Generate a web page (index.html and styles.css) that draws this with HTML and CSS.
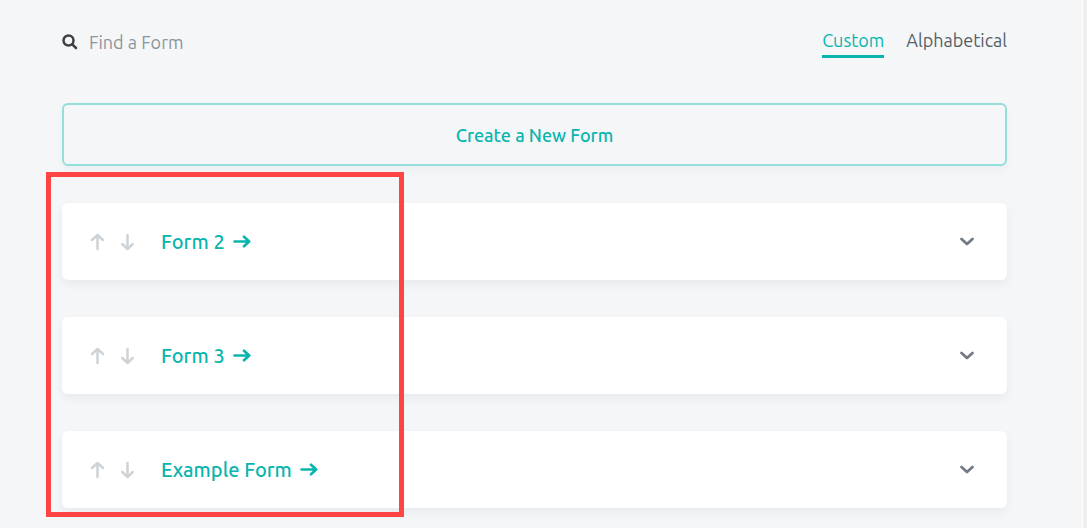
FILE: index.html
```html
<!DOCTYPE html>
<html lang="en">
<head>
<meta charset="utf-8">
<meta name="viewport" content="width=device-width, initial-scale=1">
<title>Forms</title>
<link rel="stylesheet" href="styles.css">
</head>
<body>
<svg class="sprite" aria-hidden="true">
  <symbol id="arrow" viewBox="0 0 18 14"><path d="M1.5 6.500H16M11 1.700 16.200 6.500l-5.200 4.800"/></symbol>
  <symbol id="up" viewBox="0 0 14 18"><path d="M7.500 16V2.500M2 7 7.500 2 13 7"/></symbol>
  <symbol id="down" viewBox="0 0 14 18"><path d="M6.500 2V15.500M1.300 11 6.500 16 11.700 11"/></symbol>
  <symbol id="chevron" viewBox="0 0 16 10"><path d="M2.500 2l5.500 5L13.500 2"/></symbol>
</svg>
<main class="page">
  <header class="toolbar">
    <label class="search">
      <svg class="search-icon" viewBox="0 0 16 16" role="img" aria-label="Search"><circle cx="6.500" cy="6.500" r="5"/><path d="M10.300 10.300 14 14"/></svg>
      <input class="search-input" type="text" placeholder="Find a Form" aria-label="Find a Form">
    </label>
    <nav class="tabs">
      <a class="tab tab-active" href="#custom">Custom</a>
      <a class="tab" href="#alphabetical">Alphabetical</a>
    </nav>
  </header>
  <button class="create" type="button">Create a New Form</button>
  <ul class="forms">
    <li class="card">
      <button class="move" type="button" aria-label="Move up"><svg class="move-icon"><use href="#up"/></svg></button>
      <button class="move" type="button" aria-label="Move down"><svg class="move-icon"><use href="#down"/></svg></button>
      <a class="form-link" href="#form-2">Form 2<svg class="arrow-icon"><use href="#arrow"/></svg></a>
      <button class="toggle" type="button" aria-label="Show details"><svg class="chevron-icon"><use href="#chevron"/></svg></button>
    </li>
    <li class="card">
      <button class="move" type="button" aria-label="Move up"><svg class="move-icon"><use href="#up"/></svg></button>
      <button class="move" type="button" aria-label="Move down"><svg class="move-icon"><use href="#down"/></svg></button>
      <a class="form-link" href="#form-3">Form 3<svg class="arrow-icon"><use href="#arrow"/></svg></a>
      <button class="toggle" type="button" aria-label="Show details"><svg class="chevron-icon"><use href="#chevron"/></svg></button>
    </li>
    <li class="card">
      <button class="move" type="button" aria-label="Move up"><svg class="move-icon"><use href="#up"/></svg></button>
      <button class="move" type="button" aria-label="Move down"><svg class="move-icon"><use href="#down"/></svg></button>
      <a class="form-link" href="#example-form">Example Form<svg class="arrow-icon"><use href="#arrow"/></svg></a>
      <button class="toggle" type="button" aria-label="Show details"><svg class="chevron-icon"><use href="#chevron"/></svg></button>
    </li>
  </ul>
  <div class="highlight"></div>
</main>
</body>
</html>
```

FILE: styles.css
```css
* { box-sizing: border-box; }
body {
  margin: 0;
  background: #f4f6f8;
  color: #555f68;
  font-family: Ubuntu, "Noto Sans", sans-serif;
  font-size: 18px;
  line-height: 24px;
}
button, input { font: inherit; color: inherit; }
button { padding: 0; border: 0; background: none; cursor: pointer; }
a { color: inherit; text-decoration: none; }
svg { fill: none; stroke: currentColor; stroke-linecap: round; stroke-linejoin: round; }
.sprite { position: absolute; width: 0; height: 0; }
.page {
  position: relative;
  min-height: 100vh;
  padding: 28px 76px 20px 62px;
  border-right: 4px solid #f0f0f0;
  box-shadow: inset -1px 0 #fff;
}
.toolbar {
  display: flex;
  justify-content: space-between;
  align-items: flex-start;
  margin-bottom: 45px;
}
.search { display: flex; align-items: center; gap: 11px; padding-top: 2px; }
.search-icon { width: 16px; height: 16px; color: #3c4044; stroke-width: 2.5; }
.search-input { height: 24px; padding: 0; border: 0; outline: 0; background: none; }
.search-input::placeholder { color: #8b959e; opacity: 1; }
.tabs { display: flex; gap: 22px; }
.tab { height: 30px; border-bottom: 3px solid transparent; }
.tab-active { color: #08b5ae; border-color: #08b5ae; }
.create {
  display: block;
  width: 100%;
  height: 63px;
  border: 2px solid #94ded9;
  border-radius: 6px;
  box-shadow: 0 4px 8px rgba(8, 80, 80, 0.04);
  color: #08b5ae;
  font-weight: 500;
}
.forms {
  display: grid;
  gap: 37px;
  margin: 37px 0 0;
  padding: 0;
  list-style: none;
}
.card {
  display: flex;
  align-items: center;
  gap: 17px;
  height: 77px;
  padding: 0 32px 0 28px;
  border-radius: 6px;
  background: #fff;
  box-shadow: 0 4px 10px rgba(40, 45, 50, 0.06);
}
.move { display: flex; color: #ced3d8; }
.move-icon { width: 14px; height: 18px; stroke-width: 2.5; }
.form-link {
  display: flex;
  align-items: center;
  gap: 8px;
  margin-left: 9px;
  color: #08b5ae;
  font-size: 20px;
  font-weight: 500;
}
.arrow-icon { width: 18px; height: 14px; stroke-width: 2.6; }
.toggle { display: flex; margin-left: auto; color: #727b84; }
.chevron-icon { width: 16px; height: 10px; stroke-width: 2.8; }
.highlight {
  position: absolute;
  top: 172px;
  left: 46px;
  width: 358px;
  height: 345px;
  border: 5px solid #ff4444;
  pointer-events: none;
}
```
